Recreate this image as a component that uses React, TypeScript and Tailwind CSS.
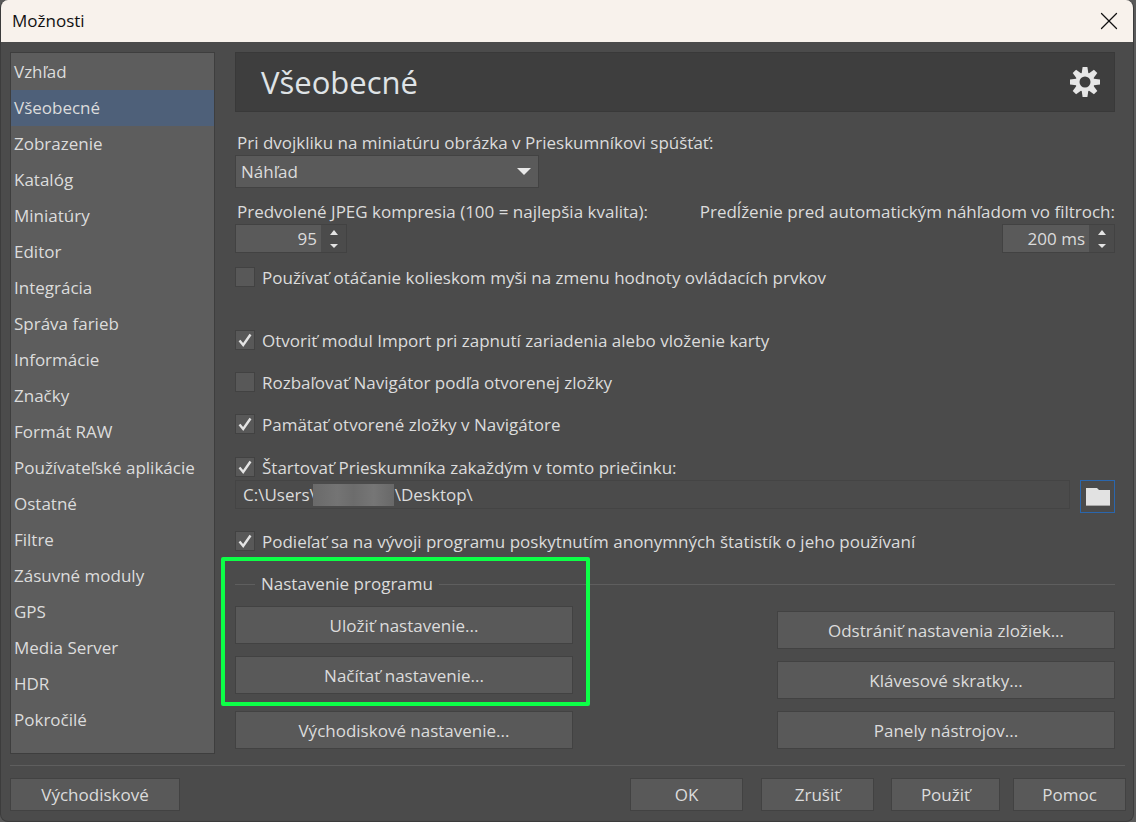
import { X } from "lucide-react";

const navItems = [
  "Vzhľad",
  "Všeobecné",
  "Zobrazenie",
  "Katalóg",
  "Miniatúry",
  "Editor",
  "Integrácia",
  "Správa farieb",
  "Informácie",
  "Značky",
  "Formát RAW",
  "Používateľské aplikácie",
  "Ostatné",
  "Filtre",
  "Zásuvné moduly",
  "GPS",
  "Media Server",
  "HDR",
  "Pokročilé",
];

function Gear() {
  const angles = [0, 45, 90, 135, 180, 225, 270, 315];
  return (
    <svg width="30" height="30" viewBox="0 0 30 30" className="shrink-0">
      {angles.map((a) => (
        <path key={a} d="M12.6 0 H17.4 L18.6 8 H11.4 Z" fill="#e6e6e6" transform={`rotate(${a} 15 15)`} />
      ))}
      <circle cx="15" cy="15" r="9.5" fill="#e6e6e6" />
      <circle cx="15" cy="15" r="5.5" fill="#3e3e3e" />
    </svg>
  );
}

function Checkbox({ checked = false, label }: { checked?: boolean; label: string }) {
  return (
    <div className="flex h-5 items-center gap-[7px]">
      <div className="flex h-5 w-5 items-center justify-center border border-[#424242] bg-[#585858]">
        {checked && (
          <svg width="16" height="16" viewBox="0 0 16 16">
            <path d="M2.5 8.5 L6.2 13 L13.5 2.5" fill="none" stroke="#e4e4e4" strokeWidth="2.4" />
          </svg>
        )}
      </div>
      <span className="whitespace-nowrap pt-px">{label}</span>
    </div>
  );
}

function Spinner({ value, width }: { value: string; width: string }) {
  return (
    <div className={`flex h-[29px] border border-[#424242] ${width}`}>
      <div className="flex flex-1 items-center justify-end bg-[#5a5a5a] pr-[4px] pt-px">{value}</div>
      <div className="flex w-[25px] flex-col items-center justify-center gap-[9px]">
        <div className="h-0 w-0 border-x-[4px] border-b-[5px] border-x-transparent border-b-[#e4e4e4]" />
        <div className="h-0 w-0 border-x-[4px] border-t-[4px] border-x-transparent border-t-[#e4e4e4]" />
      </div>
    </div>
  );
}

function Btn({ label, className = "" }: { label: string; className?: string }) {
  return (
    <div className={`flex items-center justify-center border border-[#424242] bg-[#595959] pt-px whitespace-nowrap ${className}`}>
      {label}
    </div>
  );
}

export default function App() {
  return (
    <div className="h-[822px] w-[1136px] overflow-hidden bg-[#5a5a5a] font-['Open_Sans','Noto_Sans',sans-serif] text-[17px] text-[#dcdcdc]">
      <div className="relative flex h-[822px] w-[1134px] flex-col overflow-hidden rounded-lg border-x border-b border-[#3c3c3c] bg-[#4b4b4b]">
        {/* Title bar */}
        <div className="flex h-[42px] shrink-0 items-center justify-between bg-[#f8f2ec] pl-[11px] pr-[9px] text-[#111111]">
          <span>Možnosti</span>
          <X size={30} strokeWidth={1} className="text-[#111111]" />
        </div>

        {/* Body */}
        <div className="flex h-[712px] shrink-0 gap-5 pl-[9px] pr-[18px] pt-[10px]">
          <div className="h-[702px] w-[205px] shrink-0 border border-[#3e3e3e] bg-[#5d5d5d] pt-[1px]">
            {navItems.map((item) => (
              <div
                key={item}
                className={`flex h-9 items-center pl-[3px] ${item === "Všeobecné" ? "bg-[#4e6079]" : ""}`}
              >
                {item}
              </div>
            ))}
          </div>

          <div className="flex w-[880px] flex-col">
            {/* Page header */}
            <div className="flex h-[60px] shrink-0 items-center justify-between border border-[#393939] bg-[#3e3e3e] pl-[25px] pr-[14px]">
              <span className="text-[31px] text-[#dfe3e6]">Všeobecné</span>
              <Gear />
            </div>

            <div className="mb-px mt-[19px] h-[23px] pl-[2px] leading-[23px]">Pri dvojkliku na miniatúru obrázka v Prieskumníkovi spúšťať:</div>
            <div className="flex h-[33px] w-[304px] items-center justify-between border border-[#424242] bg-[#5a5a5a] pl-[5px] pr-[7px]">
              <span>Náhľad</span>
              <div className="h-0 w-0 border-x-[7px] border-t-[7px] border-x-transparent border-t-[#e8e8e8]" />
            </div>

            <div className="mb-px mt-[12px] flex h-[23px] items-center justify-between pl-[2px]">
              <span>Predvolené JPEG kompresia (100 = najlepšia kvalita):</span>
              <span>Predĺženie pred automatickým náhľadom vo filtroch:</span>
            </div>
            <div className="flex items-center justify-between">
              <Spinner value="95" width="w-[112px]" />
              <Spinner value="200 ms" width="w-[113px]" />
            </div>

            <div className="mt-[14px]">
              <Checkbox label="Používať otáčanie kolieskom myši na zmenu hodnoty ovládacích prvkov" />
            </div>
            <div className="mt-[43px]">
              <Checkbox checked label="Otvoriť modul Import pri zapnutí zariadenia alebo vloženie karty" />
            </div>
            <div className="mt-[22px]">
              <Checkbox label="Rozbaľovať Navigátor podľa otvorenej zložky" />
            </div>
            <div className="mt-[22px]">
              <Checkbox checked label="Pamätať otvorené zložky v Navigátore" />
            </div>
            <div className="mt-[23px]">
              <Checkbox checked label="Štartovať Prieskumníka zakaždým v tomto priečinku:" />
            </div>

            <div className="mt-[3px] flex items-start gap-[10px]">
              <div className="flex h-[29px] w-[835px] items-center border border-[#444444] pl-[7px]">
                <span>C:\Users\</span>
                <div className="-ml-[3px] mr-px h-[22px] w-[81px] bg-[linear-gradient(90deg,#6a6a6a,#747474_30%,#6c6c6c_50%,#767676_75%,#686868)]" />
                <span>\Desktop\</span>
              </div>
              <div className="flex h-[33px] w-[35px] items-center justify-center border border-[#2a66ad]">
                <svg width="24" height="20" viewBox="0 0 24 20">
                  <path d="M0 1 H11 L13 3 H24 V19 H0 Z" fill="#e2e2e2" />
                  <rect x="0" y="18" width="24" height="1" fill="#a8a8a8" />
                </svg>
              </div>
            </div>

            <div className="mt-[18px]">
              <Checkbox checked label="Podieľať sa na vývoji programu poskytnutím anonymných štatistík o jeho používaní" />
            </div>

            {/* Group title */}
            <div className="mt-[21px] flex h-6 items-center">
              <div className="h-px w-5 bg-[#5e5e5e]" />
              <span className="px-[6px]">Nastavenie programu</span>
              <div className="h-px flex-1 bg-[#5e5e5e]" />
            </div>

            <div className="mt-[10px] flex justify-between">
              <div className="flex w-[338px] flex-col">
                <Btn label="Uložiť nastavenie..." className="h-[38px]" />
                <Btn label="Načítať nastavenie..." className="mt-3 h-[38px]" />
                <Btn label="Východiskové nastavenie..." className="mt-[17px] h-[38px]" />
              </div>
              <div className="flex w-[338px] flex-col pt-[5px]">
                <Btn label="Odstrániť nastavenia zložiek..." className="h-[38px]" />
                <Btn label="Klávesové skratky..." className="mt-3 h-[38px]" />
                <Btn label="Panely nástrojov..." className="mt-3 h-[38px]" />
              </div>
            </div>
          </div>
        </div>

        {/* Footer */}
        <div className="mx-[9px] mt-[11px] h-px w-[1115px] bg-[#5e5e5e]" />
        <div className="mt-3 flex items-start pl-[9px]">
          <Btn label="Východiskové" className="h-[33px] w-[170px]" />
          <Btn label="OK" className="ml-[450px] h-[33px] w-[113px]" />
          <Btn label="Zrušiť" className="ml-[18px] h-[33px] w-[113px]" />
          <Btn label="Použiť" className="ml-[17px] h-[33px] w-[109px]" />
          <Btn label="Pomoc" className="ml-[13px] h-[33px] w-[113px]" />
        </div>

        {/* Annotation */}
        <div className="absolute left-[220px] top-[557px] h-[149px] w-[369px] rounded-[2px] border-[4px] border-[#0dff47]" />
      </div>
    </div>
  );
}
